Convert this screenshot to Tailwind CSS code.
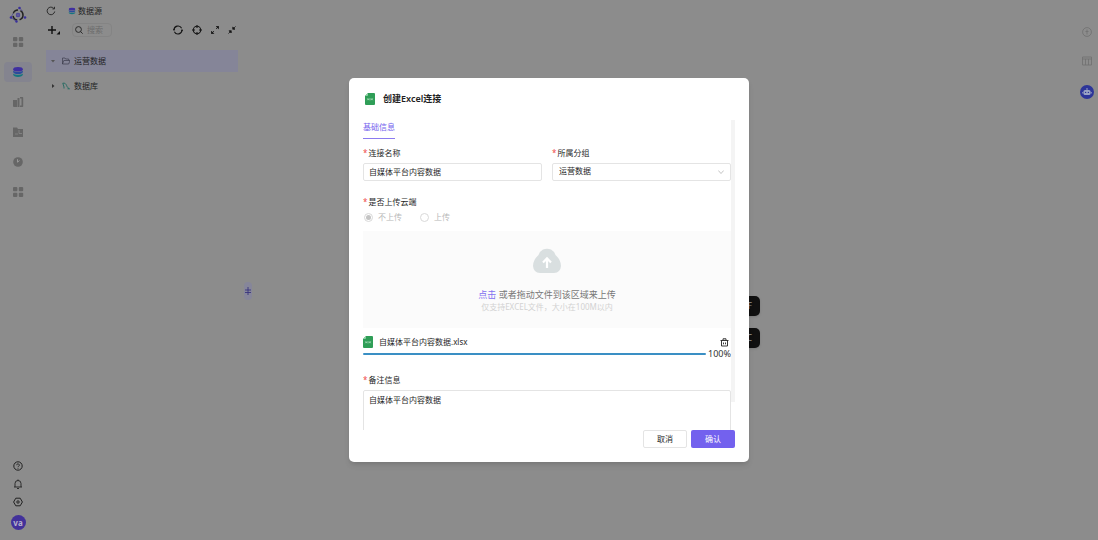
<!DOCTYPE html>
<html lang="zh-CN">
<head>
<meta charset="utf-8">
<title>数据源</title>
<script src="https://cdn.jsdelivr.net/npm/@tailwindcss/browser@4"></script>
</head>
<body class="relative flex h-screen overflow-hidden bg-[#8c8c8c] font-['Noto_Sans','Noto_Sans_CJK_SC',sans-serif] text-[8px] leading-3 text-[#1f1f1f]">

<svg class="hidden">
  <symbol id="grid" viewBox="0 0 12 12"><g fill="currentColor"><rect x="1" y="1" width="4.4" height="4.2" rx="1"/><rect x="6.8" y="1" width="4.4" height="4.2" rx="1"/><rect x="1" y="6.8" width="4.4" height="4.2" rx="1"/><rect x="6.8" y="6.8" width="4.4" height="4.2" rx="1"/></g></symbol>
  <symbol id="db" viewBox="0 0 12 12"><path d="M1.2 7.4v1.4c0 1.2 2.1 2.2 4.8 2.2s4.8-1 4.8-2.2V7.4C9.800 8.400 8 8.800 6 8.800s-3.800-.4-4.800-1.400z" fill="#15757f"/><path d="M1.200 4.600v1.300C1.200 7.100 3.300 8 6 8s4.800-.9 4.800-2.100V4.600C9.800 5.600 8 6 6 6s-3.800-.4-4.800-1.400z" fill="#2a4c9c"/><ellipse cx="6" cy="3.200" rx="4.800" ry="2.200" fill="#3f2fa0"/></symbol>
  <symbol id="xls" viewBox="0 0 10 12"><path d="M3 0h6a1 1 0 0 1 1 1v10a1 1 0 0 1-1 1H1a1 1 0 0 1-1-1V3z" fill="#2f9e57"/><path d="M3 0v2a1 1 0 0 1-1 1H0z" fill="#8fd0a6"/><path d="M2.300 5.400l1.600 1.800M3.900 5.400L2.300 7.200M5 5.400v1.800M6.200 7.200l1.500-1.800M6.200 5.400l1.500 1.800" stroke="#d9f2e1" stroke-width=".6" fill="none"/></symbol>
</svg>

<nav class="flex w-9 shrink-0 flex-col items-center justify-between pt-1.5 pb-2.5 text-[#666]">
  <div class="flex flex-col items-center">
    <svg class="size-[18px]" viewBox="0 0 18 18" fill="none"><circle cx="9" cy="9" r="5" stroke="#222" stroke-width="1.500" stroke-dasharray="6 2.500"/><circle cx="9" cy="9" r="2.200" fill="#3f35a0"/><path d="M9 7v4M7 9h4" stroke="#888" stroke-width=".5"/><g fill="#3a319c"><circle cx="10.500" cy="2" r="1.300"/><circle cx="2" cy="11.500" r="1.300"/><circle cx="7.500" cy="15.500" r="1.200"/><circle cx="16" cy="11.500" r="1.300"/></g><path d="M2 11.500l5.500 4M4 7.500L2 11.500M10.500 2l3 3" stroke="#3a319c" stroke-width=".6"/></svg>
    <button aria-label="应用" class="mt-2 flex h-5 w-7 items-center justify-center"><svg class="size-3"><use href="#grid"/></svg></button>
    <button aria-label="数据源" class="mt-2.5 flex h-5 w-7 items-center justify-center rounded-sm bg-[#84848f]"><svg class="size-3"><use href="#db"/></svg></button>
    <button aria-label="图表" class="mt-2.5 flex h-5 w-7 items-center justify-center"><svg class="size-3" viewBox="0 0 12 12" fill="currentColor"><path d="M1 4h4v7H2a1 1 0 0 1-1-1zM5.500 2h2v9h-2zM8 1h2.500a.7.7 0 0 1 .7.700v8.600a.7.7 0 0 1-.7.700H8V9.500h1.500V2.500H8z"/></svg></button>
    <button aria-label="文件" class="mt-2.5 flex h-5 w-7 items-center justify-center"><svg class="size-3" viewBox="0 0 12 12"><path d="M1 1.500h4l1 1.500h5v8H1z" fill="currentColor"/><path d="M3 8h3M7 4v3.500h3" stroke="#8c8c8c" stroke-width=".7" fill="none"/></svg></button>
    <button aria-label="监控" class="mt-2.5 flex h-5 w-7 items-center justify-center"><svg class="size-3" viewBox="0 0 12 12"><circle cx="6" cy="6" r="4.800" fill="currentColor"/><path d="M5.500 3.200v3l2-1.700" stroke="#999" fill="none"/></svg></button>
    <button aria-label="更多" class="mt-2.5 flex h-5 w-7 items-center justify-center"><svg class="size-3"><use href="#grid"/></svg></button>
  </div>
  <div class="flex flex-col items-center gap-2 text-[#222]">
    <button aria-label="帮助"><svg class="size-2.5" viewBox="0 0 10 10" fill="none" stroke="currentColor"><circle cx="5" cy="5" r="4.200"/><path d="M3.700 4.200a1.300 1.300 0 1 1 1.900 1.100c-.4.200-.6.400-.6.800M5 6.900v.8" stroke-width=".9"/></svg></button>
    <button aria-label="通知"><svg class="size-2.5" viewBox="0 0 10 10" fill="none" stroke="currentColor"><path d="M1 8h8M2 8V4.500a3 3 0 0 1 6 0V8M5 .5v1M4 9.500h2" stroke-width=".9"/></svg></button>
    <button aria-label="设置"><svg class="size-2.5" viewBox="0 0 10 10" fill="none" stroke="currentColor"><path d="M2.800 1.200h4.400L9.400 5 7.200 8.800H2.800L.6 5z"/><circle cx="5" cy="5" r="1.200"/></svg></button>
    <button class="size-[15px] rounded-full bg-[#42319a] text-[8px] leading-[15px] font-bold text-[#b5b0cc]">va</button>
  </div>
</nav>

<main class="relative flex min-w-0 flex-1 flex-col pl-2.5">
  <header class="flex h-[21px] items-center gap-3">
    <button aria-label="刷新"><svg class="size-2.5" viewBox="0 0 10 10" fill="none" stroke="#222" stroke-width=".9"><path d="M8.700 5.500A3.800 3.800 0 1 1 7.800 2.400M8.500.8v2.100H6.400"/></svg></button>
    <h1 class="flex items-center gap-0.5"><svg class="size-2"><use href="#db"/></svg>数据源</h1>
  </header>
  <section class="w-[192px]">
    <div class="flex h-[17px] items-center">
      <button aria-label="新建" class="ml-0.5"><svg class="h-2.5 w-3" viewBox="0 0 12 10"><path d="M0 5h8M4 1v8" stroke="#111" stroke-width="1.400"/><path d="M12 6v3.500H8.500z" fill="#111"/></svg></button>
      <label class="ml-3 flex h-3.5 w-10 items-center gap-1 rounded-sm border border-[#848484] px-0.5"><svg class="size-2 shrink-0" viewBox="0 0 8 8" fill="none" stroke="#222" stroke-width=".9"><circle cx="3.500" cy="3.500" r="2.900"/><path d="M5.600 5.600L7.700 7.700"/></svg><input aria-label="搜索" placeholder="搜索" class="w-full min-w-0 bg-transparent outline-none placeholder:text-[#6b6b6b]"></label>
      <div class="mr-0.5 ml-auto flex items-center gap-[9px] text-[#161616]">
        <button aria-label="重新加载"><svg class="size-2.5" viewBox="0 0 10 10" fill="none" stroke="currentColor" stroke-width="1.100"><path d="M1 5.200a4 4 0 0 1 7.600-1.900M9 4.800a4 4 0 0 1-7.600 1.900"/><path d="M0 4.700h2M8 5.300h2"/></svg></button>
        <button aria-label="定位"><svg class="size-2.5" viewBox="0 0 10 10" fill="none" stroke="currentColor" stroke-width="1.100"><circle cx="5" cy="5" r="3.700"/><path d="M5 0v3M5 7v3M0 5h3M7 5h3"/></svg></button>
        <button aria-label="展开"><svg class="size-2" viewBox="0 0 8 8" fill="currentColor" stroke="currentColor"><path d="M5 3l2.500-2.500M5.300.5h2.200v2.200zM3 5L.5 7.500M.5 5.300v2.200h2.200z" stroke-width=".8"/></svg></button>
        <button aria-label="收起"><svg class="size-2" viewBox="0 0 8 8" fill="currentColor" stroke="currentColor"><path d="M4.800 3.200L7.600.4M4.800 1v2.200H7zM3.200 4.800L.4 7.600M1 4.800h2.200V7z" stroke-width=".8"/></svg></button>
      </div>
    </div>
    <ul class="mt-3 flex flex-col gap-[3px]">
      <li class="flex h-[22px] items-center bg-[#8080a0]/60 pl-[5px]"><svg class="size-1" viewBox="0 0 4 4"><path d="M0 1h4L2 3.500z" fill="#555"/></svg><svg class="ml-[7px] size-2" viewBox="0 0 8 8" fill="none" stroke="#3c3c4c" stroke-width=".7"><path d="M.5 7V1h2.400l.8 1h3v1.300M.5 7l1.300-3.500H8L6.700 7z"/></svg><span class="ml-1">运营数据</span></li>
      <li class="flex h-[22px] items-center pl-[5px]"><svg class="size-1" viewBox="0 0 4 4"><path d="M1 0v4l2.500-2z" fill="#333"/></svg><svg class="ml-[7px] size-2" viewBox="0 0 8 8" fill="none" stroke="#1f6a60" stroke-width=".9"><path d="M2 6.500V5L.8 1.200C3 .8 4 2 4.600 3.500 5 5 6 6 7.500 6.800H5.500"/></svg><span class="ml-1">数据库</span></li>
    </ul>
  </section>
  <button aria-label="收起侧栏" class="absolute top-[282px] left-[208px] flex h-[18px] w-2 items-center justify-center rounded-sm bg-[#86869a]"><svg class="size-2" viewBox="0 0 8 8" stroke="#39347e" stroke-width=".9"><path d="M1 3h6M1 5.500h6M4 0v8"/></svg></button>
</main>

<aside class="flex w-[22px] shrink-0 flex-col items-center gap-[19px] pt-[27px] text-[#707070]">
  <button aria-label="信息"><svg class="size-2.5" viewBox="0 0 10 10" fill="none" stroke="currentColor" stroke-width=".8"><circle cx="5" cy="5" r="4.400"/><path d="M5 2.500v5M3.500 4.500h3"/></svg></button>
  <button aria-label="表格"><svg class="size-2.5" viewBox="0 0 10 10" fill="none" stroke="currentColor" stroke-width=".8"><path d="M.5 1h9v8h-9zM.5 3h9M3.500 3v6M6.500 3v6"/></svg></button>
  <button aria-label="助手"><svg class="size-3.5" viewBox="0 0 14 14"><circle cx="7" cy="7" r="7" fill="#2d3599"/><rect x="3.500" y="5" width="7" height="5" rx="1.500" fill="#9aa3c4"/><path d="M7 3v2M2.800 7v1.500M11.200 7v1.500" stroke="#9aa3c4"/><circle cx="5.600" cy="7.400" r=".7" fill="#2d3599"/><circle cx="8.400" cy="7.400" r=".7" fill="#2d3599"/></svg></button>
</aside>

<div class="absolute inset-0 flex items-center justify-center">
  <div class="relative w-[400px]">
    <div class="absolute top-[218px] -right-[11px] h-5 w-10 rounded-[5px] bg-[#101010] pr-2 text-right leading-5 text-[#999] shadow">F</div>
    <div class="absolute top-[250px] -right-[11px] h-5 w-10 rounded-[5px] bg-[#101010] pr-2 text-right leading-5 text-[#999] shadow">C</div>

    <form role="dialog" aria-labelledby="dlg-title" class="relative rounded-[5px] bg-white px-3.5 pb-3.5 shadow-md">
      <header class="flex h-[42px] items-center gap-2 pl-0.5"><svg class="h-3 w-2.5"><use href="#xls"/></svg><h2 id="dlg-title" class="text-[9px] font-semibold">创建Excel连接</h2></header>

      <div class="relative h-[310px] overflow-hidden pr-1">
        <div class="absolute top-0 right-0 h-[282px] w-1 bg-[#f4f4f4]"></div>
        <div class="flex"><button type="button" class="border-b border-[#8b7bf0] pt-px pb-[5px] text-[#7361ee]">基础信息</button></div>

        <div class="mt-2 grid grid-cols-2 gap-2.5">
          <div><label for="name" class="flex items-center gap-px"><span class="text-[#f04a4a]">*</span>连接名称</label>
            <input id="name" value="自媒体平台内容数据" class="mt-1 block h-[18px] w-full rounded-xs border border-[#e4e4e4] px-[5px] pb-0.5 outline-none"></div>
          <div><label for="group" class="flex items-center gap-px"><span class="text-[#f04a4a]">*</span>所属分组</label>
            <div class="relative mt-1"><select id="group" class="block h-[18px] w-full appearance-none rounded-xs border border-[#e4e4e4] bg-white px-1.5 pb-0.5 outline-none"><option>运营数据</option></select><svg class="pointer-events-none absolute top-1.5 right-[7px] h-1.5 w-1.5" viewBox="0 0 6 6" fill="none" stroke="#aaa" stroke-width=".7"><path d="M.3 1.500L3 4.500l2.700-3"/></svg></div></div>
        </div>

        <fieldset class="mt-[15px]">
          <legend class="flex items-center gap-px"><span class="text-[#f04a4a]">*</span>是否上传云端</legend>
          <div class="mt-[3px] flex h-3 items-center gap-[18px] pl-px text-[#b8b8b8]">
            <label class="flex items-center gap-[5px]"><input type="radio" name="cloud" checked disabled class="size-[9px] appearance-none rounded-full border border-[#d9d9d9] bg-[#c4c4c4] bg-clip-content p-px">不上传</label>
            <label class="flex items-center gap-[5px]"><input type="radio" name="cloud" disabled class="size-[9px] appearance-none rounded-full border border-[#d9d9d9]">上传</label>
          </div>
        </fieldset>

        <div class="mt-2 flex h-[97px] flex-col items-center bg-[#fbfbfb] pt-4">
          <svg class="h-7 w-7" viewBox="0 0 28 28"><path d="M10 2.500Q14 1 18 2.500Q21 4 22.500 8Q28 13 28 19Q27.500 25.500 21 26H7Q.5 25.500 0 19Q0 13 5.500 8Q7 4 10 2.500z" fill="#d9dfe0"/><path d="M14 21v-9M10 15.500l4-4.200 4 4.200" stroke="#fff" stroke-width="2.200" fill="none"/></svg>
          <p class="mt-3.5 text-[9px] leading-3 text-[#777]"><a href="#" class="text-[#8471f0]">点击</a> 或者拖动文件到该区域来上传</p>
          <p class="text-[#d2d2d2]">仅支持EXCEL文件，大小在100M以内</p>
        </div>

        <div class="mt-2 flex h-3 items-center"><svg class="h-3 w-2.5"><use href="#xls"/></svg><span class="ml-1.5">自媒体平台内容数据.xlsx</span>
          <button type="button" aria-label="删除" class="mr-0.5 ml-auto"><svg class="size-[9px]" viewBox="0 0 9 9" fill="none" stroke="#222" stroke-width=".9"><path d="M.5 2.500h8M1.500 2.500V8h6V2.500M3 2.300V.8h3v1.500M3.500 4.500v1.800M5.500 4.500v1.800"/></svg></button></div>
        <div class="flex h-3 items-center gap-0.5"><div role="progressbar" aria-label="上传进度" aria-valuenow="100" class="h-0.5 flex-1 rounded-full bg-[#3a8fc4]"></div><span class="text-[9px] text-[#333]">100%</span></div>

        <div class="mt-3.5"><label for="memo" class="flex items-center gap-px"><span class="text-[#f04a4a]">*</span>备注信息</label>
          <textarea id="memo" class="mt-1 block h-16 w-full resize-none overflow-hidden rounded-xs border border-[#e4e4e4] bg-white px-[5px] py-[3px] outline-none">自媒体平台内容数据</textarea></div>
      </div>

      <footer class="flex justify-end gap-1">
        <button type="button" class="h-[18px] w-11 rounded-xs border border-[#e4e4e4] bg-white">取消</button>
        <button type="submit" class="h-[18px] w-11 rounded-xs bg-[#7361ee] text-white">确认</button>
      </footer>
    </form>
  </div>
</div>
</body>
</html>
